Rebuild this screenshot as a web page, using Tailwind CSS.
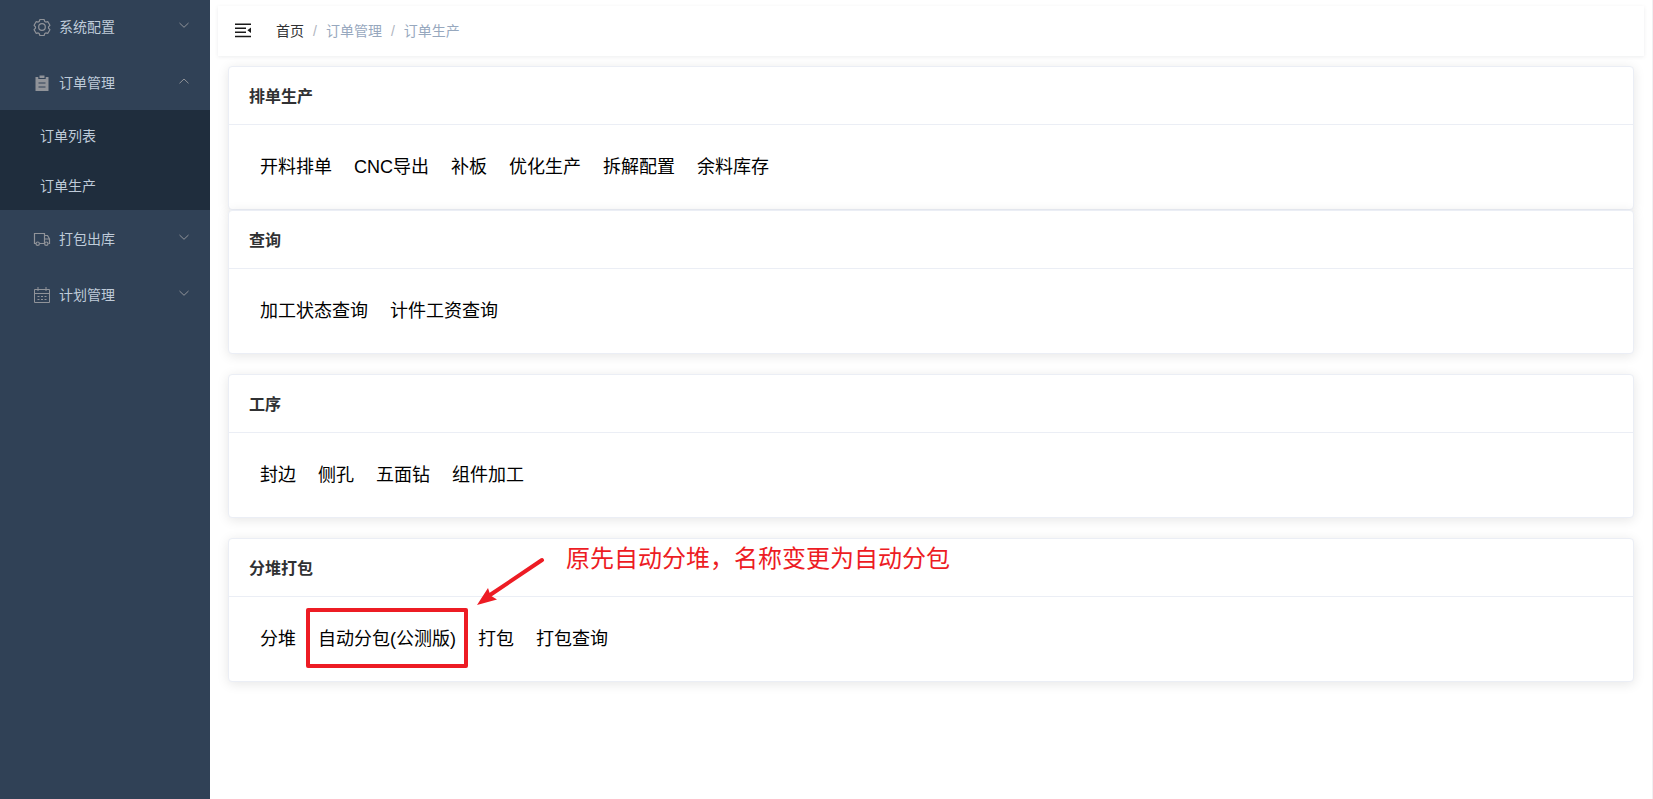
<!DOCTYPE html>
<html lang="zh-CN">
<head>
  <meta charset="UTF-8" />
  <meta name="viewport" content="width=device-width, initial-scale=1.0"/>
  <title>订单生产</title>
  <script src="https://cdn.jsdelivr.net/npm/@tailwindcss/browser@4"></script>
</head>
<body class="bg-white text-black font-['Liberation_Sans','Noto_Sans_CJK_SC',sans-serif]">
  <div class="flex min-h-screen">

    <!-- Sidebar -->
    <aside class="w-[210px] shrink-0 bg-[#304156] text-sm text-[#bfcbd9]">
      <nav>
        <button class="flex h-[54px] w-full items-center pl-[33px] pr-5" aria-expanded="false">
          <svg class="mr-2 size-[18px] text-[#909399]" viewBox="0 0 18 18" fill="none" stroke="currentColor" stroke-width="1.2">
            <path d="M6.9 1.5h4.2l.7 2 1 .6 2.1-.4 2 3.6-1.4 1.600v1.200l1.400 1.600-2 3.600-2.100-.4-1 .6-.7 2H6.900l-.7-2-1-.6-2.100.4-2-3.600 1.400-1.600V8.900L1.100 7.300l2-3.600 2.100.4 1-.6z" stroke-linejoin="round"/>
            <circle cx="9" cy="9" r="3.3"/>
          </svg>
          <span>系统配置</span>
          <svg class="mb-1 ml-auto size-3 text-[#909399]" viewBox="0 0 12 12" fill="none" stroke="currentColor"><path d="M1.5 4L6 8.3 10.5 4"/></svg>
        </button>

        <button class="flex h-14 w-full items-center pl-[33px] pr-5 pt-[2px]" aria-expanded="true">
          <svg class="mr-2 size-[18px] text-[#909399]" viewBox="0 0 18 18" fill="currentColor">
            <path d="M2.500 3h2.800v2h7.400V3h2.800v14h-13zM6.500 1.500h5V4h-5z"/>
            <path d="M5.500 9h7M5.500 13h7" stroke="#304156"/>
          </svg>
          <span>订单管理</span>
          <svg class="mb-1 ml-auto size-3 text-[#909399]" viewBox="0 0 12 12" fill="none" stroke="currentColor"><path d="M1.5 8.3L6 4l4.500 4.300"/></svg>
        </button>
        <div class="bg-[#1f2d3d]">
          <a href="#" class="flex h-[50px] items-center pl-10 pt-[2px]">订单列表</a>
          <a href="#" class="flex h-[50px] items-center pl-10 pt-[2px]">订单生产</a>
        </div>

        <button class="flex h-14 w-full items-center pl-[33px] pr-5 pt-[2px]" aria-expanded="false">
          <svg class="mr-2 size-[18px] text-[#909399]" viewBox="0 0 18 18" fill="none" stroke="currentColor" stroke-width="1.2">
            <path d="M3 13.500H1.500v-10h10v10h-5M11.500 5.500h3l2 3.500v4.500h-1M11.500 9h5"/>
            <circle cx="4.700" cy="13.700" r="1.700"/>
            <circle cx="13.300" cy="13.700" r="1.700"/>
          </svg>
          <span>打包出库</span>
          <svg class="mb-1 ml-auto size-3 text-[#909399]" viewBox="0 0 12 12" fill="none" stroke="currentColor"><path d="M1.5 4L6 8.3 10.5 4"/></svg>
        </button>

        <button class="flex h-14 w-full items-center pl-[33px] pr-5 pt-[2px]" aria-expanded="false">
          <svg class="mr-2 size-[18px] text-[#909399]" viewBox="0 0 18 18" fill="none" stroke="currentColor">
            <path d="M1.500 3.500h15v13h-15zM1.500 7.500h15M5 1v4M13 1v4"/>
            <path d="M4.500 10.500h9M4.500 13.500h9" stroke-dasharray="2 1.5"/>
          </svg>
          <span>计划管理</span>
          <svg class="mb-1 ml-auto size-3 text-[#909399]" viewBox="0 0 12 12" fill="none" stroke="currentColor"><path d="M1.5 4L6 8.3 10.5 4"/></svg>
        </button>
      </nav>
    </aside>

    <!-- Main -->
    <div class="min-w-0 flex-1 border-r border-[#f0f0f2] px-2 pt-[6px]">
      <header class="flex h-[50px] items-center bg-white pl-[17px] shadow-[0_1px_4px_rgba(0,21,41,0.08)]">
        <button aria-label="收起菜单">
          <svg class="size-4" viewBox="0 0 16 16" fill="#1a1a1a">
            <path d="M0 .5h16V2H0zM0 4.500h11V6H0zM0 8.500h11V10H0zM0 12.700h16v1.500H0zM16 4.500v5.400l-3.600-2.700z"/>
          </svg>
        </button>
        <nav class="ml-[25px] flex items-center text-sm text-[#97a8be]">
          <a href="#" class="text-[#303133]">首页</a>
          <span class="mx-[9px] text-[#b0b5c0]">/</span>
          <span>订单管理</span>
          <span class="mx-[9px] text-[#b0b5c0]">/</span>
          <span>订单生产</span>
        </nav>
      </header>

      <main class="px-[10px] pt-[10px] text-lg">
        <section class="rounded border border-[#ebeef5] bg-white shadow-[0_2px_12px_rgba(0,0,0,0.1)]">
          <h2 class="border-b border-[#ebeef5] px-5 pt-[18px] pb-4 text-base leading-[23px] font-bold text-[#303133]">排单生产</h2>
          <ul class="flex gap-[22px] px-[31px] py-5 leading-[44px]">
            <li><a href="#">开料排单</a></li>
            <li><a href="#">CNC导出</a></li>
            <li><a href="#">补板</a></li>
            <li><a href="#">优化生产</a></li>
            <li><a href="#">拆解配置</a></li>
            <li><a href="#">余料库存</a></li>
          </ul>
        </section>

        <section class="mb-5 rounded border border-[#ebeef5] bg-white shadow-[0_2px_12px_rgba(0,0,0,0.1)]">
          <h2 class="border-b border-[#ebeef5] px-5 pt-[18px] pb-4 text-base leading-[23px] font-bold text-[#303133]">查询</h2>
          <ul class="flex gap-[22px] px-[31px] py-5 leading-[44px]">
            <li><a href="#">加工状态查询</a></li>
            <li><a href="#">计件工资查询</a></li>
          </ul>
        </section>

        <section class="mb-5 rounded border border-[#ebeef5] bg-white shadow-[0_2px_12px_rgba(0,0,0,0.1)]">
          <h2 class="border-b border-[#ebeef5] px-5 pt-[18px] pb-4 text-base leading-[23px] font-bold text-[#303133]">工序</h2>
          <ul class="flex gap-[22px] px-[31px] py-5 leading-[44px]">
            <li><a href="#">封边</a></li>
            <li><a href="#">侧孔</a></li>
            <li><a href="#">五面钻</a></li>
            <li><a href="#">组件加工</a></li>
          </ul>
        </section>

        <section class="mb-5 rounded border border-[#ebeef5] bg-white shadow-[0_2px_12px_rgba(0,0,0,0.1)]">
          <h2 class="border-b border-[#ebeef5] px-5 pt-[18px] pb-4 text-base leading-[23px] font-bold text-[#303133]">分堆打包</h2>
          <ul class="flex gap-[22px] px-[31px] py-5 leading-[44px]">
            <li><a href="#">分堆</a></li>
            <li class="relative">
              <a href="#">自动分包(公测版)</a>
              <!-- Rename note: frame, arrow, text -->
              <span class="pointer-events-none absolute -inset-x-3 -top-[9px] -bottom-[7px] rounded-xs border-4 border-[#ed1c24]"></span>
              <svg class="pointer-events-none absolute -top-15 left-[158px] h-[50px] w-[70px]" viewBox="0 0 70 50" fill="#ed1c24">
                <path d="M66 3L14 38" stroke="#ed1c24" stroke-width="4" stroke-linecap="round"/>
                <path d="M1 48l11-17 2.500 7.500 6.500 4z"/>
              </svg>
              <p class="pointer-events-none absolute -top-[74px] left-[248px] text-2xl leading-8 whitespace-nowrap text-[#ed1c24]">原先自动分堆，名称变更为自动分包</p>
            </li>
            <li><a href="#">打包</a></li>
            <li><a href="#">打包查询</a></li>
          </ul>
        </section>
      </main>
    </div>
  </div>
</body>
</html>
